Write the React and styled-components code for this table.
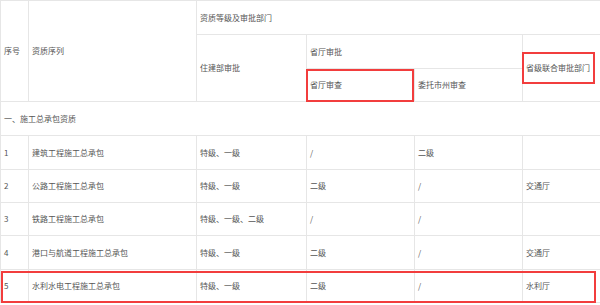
import React from "react";
import styled, { createGlobalStyle } from "styled-components";

const Global = createGlobalStyle`
  html, body { margin: 0; padding: 0; background: #fff; }
  body { width: 600px; height: 305px; overflow: hidden; }
`;

const Frame = styled.div`
  position: relative;
  width: 600px;
  height: 305px;
  overflow: hidden;
  font-family: "Noto Sans CJK SC", "Microsoft YaHei", sans-serif;
  font-size: 8px;
  color: #555;
`;

const Table = styled.table`
  border-collapse: collapse;
  table-layout: fixed;
  width: 640px;
`;

const Row = styled.tr`
  height: ${(p) => p.$h}px;
`;

const Cell = styled.td`
  border: 1px solid #e6e6e6;
  padding: 0 0 0 3px;
  vertical-align: middle;
  text-align: left;
  white-space: nowrap;
  line-height: 10px;
  font-weight: normal;
`;

const HeadCell = styled(Cell).attrs({ as: "th" })``;

const Mark = styled.div`
  position: absolute;
  box-sizing: border-box;
  border: 2px solid #f23d3d;
  pointer-events: none;
`;

const rows = [
  ["1", "建筑工程施工总承包", "特级、一级", "/", "二级", ""],
  ["2", "公路工程施工总承包", "特级、一级", "二级", "/", "交通厅"],
  ["3", "铁路工程施工总承包", "特级、一级、二级", "/", "/", ""],
  ["4", "港口与航道工程施工总承包", "特级、一级", "二级", "/", "交通厅"],
  ["5", "水利水电工程施工总承包", "特级、一级", "二级", "/", "水利厅"],
];

const heights = [34, 34, 33, 33, 34, 33];

export default function App() {
  return (
    <>
      <Global />
      <Frame>
        <Table>
          <colgroup>
            <col style={{ width: 28 }} />
            <col style={{ width: 168 }} />
            <col style={{ width: 110 }} />
            <col style={{ width: 108 }} />
            <col style={{ width: 108 }} />
            <col style={{ width: 118 }} />
          </colgroup>
          <thead>
            <Row $h={34}>
              <HeadCell rowSpan={3}>序号</HeadCell>
              <HeadCell rowSpan={3}>资质序列</HeadCell>
              <HeadCell colSpan={4}>资质等级及审批部门</HeadCell>
            </Row>
            <Row $h={34}>
              <HeadCell rowSpan={2}>住建部审批</HeadCell>
              <HeadCell colSpan={2}>省厅审批</HeadCell>
              <HeadCell rowSpan={2}>省级联合审批部门</HeadCell>
            </Row>
            <Row $h={33}>
              <HeadCell>省厅审查</HeadCell>
              <HeadCell>委托市州审查</HeadCell>
            </Row>
          </thead>
          <tbody>
            <Row $h={heights[0]}>
              <Cell colSpan={6}>一、施工总承包资质</Cell>
            </Row>
            {rows.map((r, i) => (
              <Row key={r[0]} $h={heights[i + 1]}>
                {r.map((c, j) => (
                  <Cell key={j}>{c}</Cell>
                ))}
              </Row>
            ))}
          </tbody>
        </Table>
        <Mark style={{ left: 306, top: 69, width: 108, height: 33 }} />
        <Mark style={{ left: 522, top: 52, width: 73, height: 32 }} />
        <Mark style={{ left: 1, top: 271, width: 595, height: 32 }} />
      </Frame>
    </>
  );
}
